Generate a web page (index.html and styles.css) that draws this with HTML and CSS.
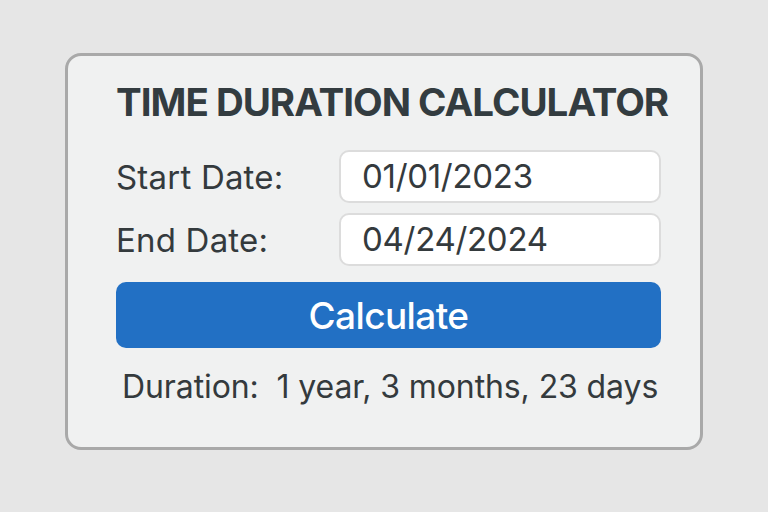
FILE: index.html
```html
<!DOCTYPE html>
<html>
<head>
<meta charset="utf-8">
<link rel="stylesheet" href="styles.css">
</head>
<body>
<div class="card">
  <h1 class="title">TIME DURATION CALCULATOR</h1>
  <div class="row row-start">
    <span class="label">Start Date:</span>
    <div class="field">01/01/2023</div>
  </div>
  <div class="row row-end">
    <span class="label">End Date:</span>
    <div class="field">04/24/2024</div>
  </div>
  <button class="btn">Calculate</button>
  <p class="result">Duration:&nbsp; 1 year, 3 months, 23 days</p>
</div>
</body>
</html>
```
FILE: styles.css
```css
html, body {
  margin: 0;
  padding: 0;
}
body {
  width: 768px;
  height: 512px;
  background: #e6e6e6;
  font-family: Inter, "Noto Sans", sans-serif;
  color: #343a3d;
  padding-top: 53px;
  padding-left: 65px;
  box-sizing: border-box;
}
.card {
  width: 638px;
  height: 397px;
  box-sizing: border-box;
  border: 3px solid #a9a9a9;
  border-radius: 16px;
  background: #f0f1f1;
  padding: 23px 39px 0 48px;
  display: flex;
  flex-direction: column;
}
.title {
  margin: 0;
  font-size: 38.5px;
  font-weight: 700;
  line-height: 46px;
  letter-spacing: -1px;
  white-space: nowrap;
  color: #333c40;
  padding-left: 0;
}
.row {
  display: flex;
  align-items: center;
  justify-content: space-between;
}
.row-start {
  margin-top: 25px;
}
.row-end {
  margin-top: 10px;
}
.label {
  font-size: 33px;
  letter-spacing: 0.2px;
  padding-left: 0;
}
.field {
  width: 322px;
  height: 53px;
  box-sizing: border-box;
  border: 2px solid #dcdcdc;
  border-radius: 10px;
  background: #ffffff;
  font-size: 33px;
  line-height: 49px;
  padding-left: 21px;
  letter-spacing: -0.3px;
  color: #343a3d;
}
.btn {
  margin-top: 16px;
  height: 66px;
  width: 545px;
  border: none;
  border-radius: 10px;
  background: #2270c4;
  color: #ffffff;
  font-family: Inter, "Noto Sans", sans-serif;
  font-size: 37px;
  font-weight: 500;
  letter-spacing: -0.6px;
  padding: 0;
}
.result {
  margin: 21px 0 0 6px;
  font-size: 32px;
  line-height: 36px;
  letter-spacing: -0.1px;
  white-space: nowrap;
  color: #343a3d;
}
```
